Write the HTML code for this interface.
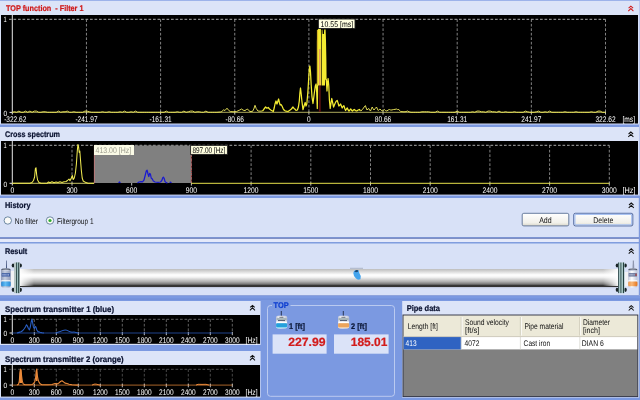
<!DOCTYPE html>
<html lang="en">
<head>
<meta charset="utf-8">
<title>TOP function - Filter 1</title>
<style>
html,body{margin:0;padding:0;background:#7b99e1;overflow:hidden;}
body{width:640px;height:400px;position:relative;font-family:"Liberation Sans", sans-serif;}
svg{position:absolute;left:-4px;top:-4px;display:block;font-family:"Liberation Sans", sans-serif;will-change:transform;filter:blur(0.45px);}
svg text{white-space:pre;}
</style>
</head>
<body>
<svg width="648" height="408" viewBox="-4 -4 648 408" text-rendering="geometricPrecision">
<rect x="-4" y="-4" width="648" height="408" fill="#7b99e1"/>
<rect x="-4" y="0" width="648" height="1" fill="#9db3ea"/>
<rect x="-4" y="1" width="648" height="14" fill="#dce4f8"/>
<rect x="-4" y="15" width="648" height="109" fill="#d8e1f7"/>
<rect x="1" y="15" width="637" height="108.5" fill="#000"/>
<text x="6" y="11" font-size="8.2" fill="#d01818" font-weight="bold" stroke="#d01818" stroke-width="0.22" textLength="77.5" lengthAdjust="spacingAndGlyphs">TOP function&#160; - Filter 1</text>
<path d="M628.6 8.2 L630.85 6.2 L633.1 8.2 M628.3 11.1 L630.85 8.6 L633.4 11.1" fill="none" stroke="#d01818" stroke-width="1.05"/>
<line x1="12.3" y1="15" x2="12.3" y2="114.5" stroke="#e8e8e8" stroke-width="1"/>
<line x1="9" y1="19.3" x2="605.5" y2="19.3" stroke="#bcbcbc" stroke-width="0.9" stroke-dasharray="2.7 1.8"/>
<line x1="9.5" y1="112.4" x2="12" y2="112.4" stroke="#e8e8e8" stroke-width="1"/>
<line x1="86.45" y1="19.3" x2="86.45" y2="112" stroke="#9a9a9a" stroke-width="0.85" stroke-dasharray="2.7 1.8"/>
<line x1="86.45" y1="111.6" x2="86.45" y2="114.6" stroke="#d6d6d6" stroke-width="0.9"/>
<line x1="160.6" y1="19.3" x2="160.6" y2="112" stroke="#9a9a9a" stroke-width="0.85" stroke-dasharray="2.7 1.8"/>
<line x1="160.6" y1="111.6" x2="160.6" y2="114.6" stroke="#d6d6d6" stroke-width="0.9"/>
<line x1="234.75" y1="19.3" x2="234.75" y2="112" stroke="#9a9a9a" stroke-width="0.85" stroke-dasharray="2.7 1.8"/>
<line x1="234.75" y1="111.6" x2="234.75" y2="114.6" stroke="#d6d6d6" stroke-width="0.9"/>
<line x1="308.9" y1="19.3" x2="308.9" y2="112" stroke="#9a9a9a" stroke-width="0.85" stroke-dasharray="2.7 1.8"/>
<line x1="308.9" y1="111.6" x2="308.9" y2="114.6" stroke="#d6d6d6" stroke-width="0.9"/>
<line x1="383.05" y1="19.3" x2="383.05" y2="112" stroke="#9a9a9a" stroke-width="0.85" stroke-dasharray="2.7 1.8"/>
<line x1="383.05" y1="111.6" x2="383.05" y2="114.6" stroke="#d6d6d6" stroke-width="0.9"/>
<line x1="457.2" y1="19.3" x2="457.2" y2="112" stroke="#9a9a9a" stroke-width="0.85" stroke-dasharray="2.7 1.8"/>
<line x1="457.2" y1="111.6" x2="457.2" y2="114.6" stroke="#d6d6d6" stroke-width="0.9"/>
<line x1="531.35" y1="19.3" x2="531.35" y2="112" stroke="#9a9a9a" stroke-width="0.85" stroke-dasharray="2.7 1.8"/>
<line x1="531.35" y1="111.6" x2="531.35" y2="114.6" stroke="#d6d6d6" stroke-width="0.9"/>
<line x1="605.5" y1="19.3" x2="605.5" y2="112" stroke="#9a9a9a" stroke-width="0.85" stroke-dasharray="2.7 1.8"/>
<line x1="605.5" y1="111.6" x2="605.5" y2="114.6" stroke="#d6d6d6" stroke-width="0.9"/>
<text x="3.6" y="22" font-size="7.6" fill="#fff" textLength="3.2" lengthAdjust="spacingAndGlyphs">1</text>
<text x="3.6" y="116.2" font-size="7.6" fill="#fff" textLength="3.6" lengthAdjust="spacingAndGlyphs">0</text>
<text x="4.2" y="122" font-size="8.2" fill="#fff" textLength="22.15" lengthAdjust="spacingAndGlyphs">-322.62</text>
<text x="75.38" y="122" font-size="8.2" fill="#fff" textLength="22.15" lengthAdjust="spacingAndGlyphs">-241.97</text>
<text x="149.53" y="122" font-size="8.2" fill="#fff" textLength="22.15" lengthAdjust="spacingAndGlyphs">-161.31</text>
<text x="225.5" y="122" font-size="8.2" fill="#fff" textLength="18.5" lengthAdjust="spacingAndGlyphs">-80.66</text>
<text x="307.08" y="122" font-size="8.2" fill="#fff" textLength="3.65" lengthAdjust="spacingAndGlyphs">0</text>
<text x="374.8" y="122" font-size="8.2" fill="#fff" textLength="16.5" lengthAdjust="spacingAndGlyphs">80.66</text>
<text x="447.13" y="122" font-size="8.2" fill="#fff" textLength="20.15" lengthAdjust="spacingAndGlyphs">161.31</text>
<text x="521.27" y="122" font-size="8.2" fill="#fff" textLength="20.15" lengthAdjust="spacingAndGlyphs">241.97</text>
<text x="595.42" y="122" font-size="8.2" fill="#fff" textLength="20.15" lengthAdjust="spacingAndGlyphs">322.62</text>
<text x="622.5" y="122" font-size="8.2" fill="#fff" textLength="12.5" lengthAdjust="spacingAndGlyphs">[ms]</text>
<line x1="12.3" y1="112.3" x2="605.5" y2="112.3" stroke="#d8d474" stroke-width="0.8"/>
<polyline points="12.3,112.3 14.5,111.8 16.7,112.3 18.9,111.1 21.1,112.3 23.3,112.3 25.5,111.1 27.7,112.3 29.9,111.1 32.1,112.3 34.3,111.1 36.5,111.1 38.7,112.3 40.9,112.3 43.1,111.8 45.3,111.8 47.5,112.3 49.7,112.3 51.9,112.3 54.1,112.3 56.3,112.3 58.5,111.1 60.7,112.3 62.9,111.8 65.1,111.8 67.3,111.1 69.5,112.3 71.7,112.3 73.9,111.8 76.1,112.3 78.3,112.3 80.5,112.3 82.7,112.3 84.9,111.1 87.1,111.1 89.3,111.8 91.5,112.3 93.7,112.3 95.9,112.3 98.1,112.3 100.3,112.3 102.5,111.8 104.7,112.3 106.9,112.3 109.1,111.8 111.3,112.3 113.5,112.3 115.7,112.3 117.9,112.3 120.1,111.8 122.3,112.3 124.5,111.1 126.7,112.3 128.9,112.3 131.1,111.8 133.3,112.3 135.5,111.1 137.7,112.3 139.9,112.3 142.1,112.3 144.3,112.3 146.5,112.3 148.7,112.3 150.9,112.3 153.1,112.3 155.3,112.3 157.5,112.3 159.7,112.3 161.9,112.3 164.1,112.3 166.3,111.1 168.5,112.3 170.7,112.3 172.9,112.3 175.1,112.3 177.3,111.8 179.5,112.3 181.7,112.3 183.9,111.1 186.1,112.3 188.3,111.8 190.5,111.1 192.7,111.1 194.9,112.3 197.1,111.8 199.3,111.8 201.5,112.3 203.7,112.3 205.9,111.1 208.1,112.3 210.3,112.3 212.5,112.3 214.7,112.3 216.9,112.3 220.5,112 221.8,111.5 223.5,109.9 225,110.5 227,108.2 228.8,110.5 230.4,111.5 233,111.8 236.4,111.6 238,110.8 239.8,110 241.5,109 243.2,110.2 245,110.6 246.3,109.6 247.5,109 248.8,110.6 250,111.5 252.5,111.4 253.8,109 255,105.3 256.2,108.5 257.9,111 260,111.2 262.5,111" fill="none" stroke="#ebe55a" stroke-width="0.95" stroke-linejoin="round"/>
<polyline points="262.5,111 264,109 265.6,107 266.9,108.2 268.2,107.5 269.5,109 270.8,110 273.3,111.5 274.3,107.5 275,104 276,101 277,104 277.8,101.5 278.6,99 279.4,102.5 280.2,105 281.1,104.6 282,106 283.2,108.8 284.5,110.5 286,111.2 288,111.5 289.8,110.3 291.4,109 293,107 294,108.4 294.8,109 296,110.4 297.4,110 298.4,107 299.3,101 299.9,93 300.5,88 301.2,94 301.9,101 303,109.7 304.2,105.5 305.2,102.5 306,106 306.8,104 307.8,93 308.8,77 309.4,68 309.9,66 310.5,72 311.2,85 312,97 313,103.5 314.2,94 315.3,86 316.1,84 316.7,92 317.3,108.5 317.6,85" fill="none" stroke="#f4ec32" stroke-width="1.25" stroke-linejoin="round"/>
<polyline points="326.3,79 327,91 327.6,82 328.1,78.5 328.8,86 329.4,100 330.2,108.5 331,103 331.75,98.5 332.6,102.5 333.6,107 334.8,104 336,101.5 337.2,100.4 338.2,103.5 338.9,106 339.9,105 340.6,104 341.4,106 342.2,108 343.1,106.5 343.9,105.6 344.8,108.5 345.6,110.5 346.5,109 347.3,108 348.2,110 349,111 350,109.8 350.8,109 351.7,110.4 352.5,111 353.4,110 354.2,109.5 355.5,110.6 356.8,111 358.2,110 359.4,109.5 360.2,110.5" fill="none" stroke="#f4ec32" stroke-width="1.25" stroke-linejoin="round"/>
<polyline points="360.2,110.5 361,111 362,109.8 362.8,109 364.2,107 365.4,105.6 366.2,108 367,110 367.9,109 368.8,108.5 369.7,110.2 370.5,111 371.4,108.8 372.2,107 373.1,108.8 374,110 375.3,108.4 376.5,107 377.4,109 378.3,110.5 379.2,109.6 380,109 381.3,110.4 382.6,111 383.5,110 384.3,109.5 385.6,110.6 386.9,111 388.2,110 389.4,109.5 390.7,110 392,110 393,109.6 393.7,109.5 395,109.4 396.3,109 397.6,109.6 398.9,109.5 399.8,110.8 400.6,111.5 404,111.8 406,111.6 407.5,111 409,111.8 411,112.3 413.2,112.3 415.4,112.3 417.6,112.3 419.8,112.3 422.0,111.8 424.2,111.8 426.4,111.8 428.6,111.8 430.8,112.3 433.0,112.3 435.2,112.3 437.4,111.1 439.6,112.3 441.8,112.3 444.0,112.3 446.2,112.3 448.4,112.3 450.6,112.3 452.8,112.3 455.0,112.3 457.2,111.1 459.4,112.3 461.6,112.3 463.8,112.3 466.0,112.3 468.2,112.3 470.4,112.3 472.6,111.8 474.8,112.3 477.0,111.1 479.2,111.1 481.4,111.8 483.6,111.8 485.8,112.3 488.0,111.1 490.2,111.1 492.4,111.8 494.6,111.8 496.8,112.3 499.0,111.1 501.2,112.3 503.4,112.3 505.6,111.8 507.8,112.3 510.0,112.3 512.2,112.3 514.4,111.8 516.6,112.3 518.8,112.3 521.0,112.3 523.2,112.3 525.4,111.1 527.6,111.8 529.8,112.3 532.0,112.3 534.2,112.3 536.4,111.8 538.6,111.1 540.8,112.3 543.0,112.3 545.2,111.8 547.4,112.3 549.6,111.1 551.8,112.3 554.0,112.3 556.2,112.3 558.4,112.3 560.6,112.3 562.8,112.3 565.0,111.8 567.2,112.3 569.4,112.3 571.6,112.3 573.8,112.3 576.0,111.8 578.2,112.3 580.4,112.3 582.6,112.3 584.8,112.3 587.0,112.3 589.2,112.3 591.4,111.8 593.6,112.3 595.8,112.3 598.0,111.1 600.2,111.1 602.4,112.3 604.6,112.3 605.5,112.3" fill="none" stroke="#ebe55a" stroke-width="0.95" stroke-linejoin="round"/>
<polygon points="316.9,85.5 316.9,42 317.3,31 318,29 320.9,29 321.1,40 321.1,85.5" fill="#f4ec32"/>
<polygon points="321.7,85.5 321.7,30 322.4,29.5 322.7,34 323.9,34 324.2,29.5 325.6,29.5 326,40 326.4,60 326.6,79 325.2,80 325,85.5" fill="#f4ec32"/>
<rect x="316.9" y="30" width="1.2" height="55" fill="#d4b426"/>
<rect x="319" y="49" width="1.5" height="36.5" fill="#e8a05c"/>
<rect x="318.9" y="85.5" width="1.8" height="26.5" fill="#5c1010"/>
<rect x="318.4" y="19" width="36.6" height="9.5" fill="#ffffe1" stroke="#222" stroke-width="0.9"/>
<text x="320.6" y="27" font-size="8.2" fill="#000" textLength="32.5" lengthAdjust="spacingAndGlyphs">10.55 [ms]</text>
<rect x="-4" y="124" width="648" height="1" fill="#a9bbec"/>
<rect x="-4" y="125" width="648" height="2" fill="#7c99e0"/>
<rect x="-4" y="127" width="648" height="14" fill="#dce4f8"/>
<rect x="-4" y="141" width="648" height="54" fill="#d8e1f7"/>
<rect x="1" y="141" width="637" height="53.6" fill="#000"/>
<text x="5" y="137.4" font-size="8.2" fill="#0a1230" font-weight="bold" stroke="#0a1230" stroke-width="0.22" textLength="55" lengthAdjust="spacingAndGlyphs">Cross spectrum</text>
<path d="M628.6 134.0 L630.85 132 L633.1 134.0 M628.3 136.9 L630.85 134.4 L633.4 136.9" fill="none" stroke="#101010" stroke-width="1.05"/>
<line x1="12.3" y1="141" x2="12.3" y2="185.5" stroke="#e8e8e8" stroke-width="1"/>
<line x1="9" y1="145.3" x2="609.3" y2="145.3" stroke="#bcbcbc" stroke-width="0.9" stroke-dasharray="2.7 1.8"/>
<line x1="9.5" y1="183.3" x2="12" y2="183.3" stroke="#e8e8e8" stroke-width="1"/>
<line x1="72.0" y1="145.3" x2="72.0" y2="183" stroke="#9a9a9a" stroke-width="0.85" stroke-dasharray="2.7 1.8"/>
<line x1="72.0" y1="182.6" x2="72.0" y2="185.6" stroke="#d6d6d6" stroke-width="0.9"/>
<line x1="131.7" y1="145.3" x2="131.7" y2="183" stroke="#9a9a9a" stroke-width="0.85" stroke-dasharray="2.7 1.8"/>
<line x1="131.7" y1="182.6" x2="131.7" y2="185.6" stroke="#d6d6d6" stroke-width="0.9"/>
<line x1="191.4" y1="145.3" x2="191.4" y2="183" stroke="#9a9a9a" stroke-width="0.85" stroke-dasharray="2.7 1.8"/>
<line x1="191.4" y1="182.6" x2="191.4" y2="185.6" stroke="#d6d6d6" stroke-width="0.9"/>
<line x1="251.1" y1="145.3" x2="251.1" y2="183" stroke="#9a9a9a" stroke-width="0.85" stroke-dasharray="2.7 1.8"/>
<line x1="251.1" y1="182.6" x2="251.1" y2="185.6" stroke="#d6d6d6" stroke-width="0.9"/>
<line x1="310.8" y1="145.3" x2="310.8" y2="183" stroke="#9a9a9a" stroke-width="0.85" stroke-dasharray="2.7 1.8"/>
<line x1="310.8" y1="182.6" x2="310.8" y2="185.6" stroke="#d6d6d6" stroke-width="0.9"/>
<line x1="370.5" y1="145.3" x2="370.5" y2="183" stroke="#9a9a9a" stroke-width="0.85" stroke-dasharray="2.7 1.8"/>
<line x1="370.5" y1="182.6" x2="370.5" y2="185.6" stroke="#d6d6d6" stroke-width="0.9"/>
<line x1="430.2" y1="145.3" x2="430.2" y2="183" stroke="#9a9a9a" stroke-width="0.85" stroke-dasharray="2.7 1.8"/>
<line x1="430.2" y1="182.6" x2="430.2" y2="185.6" stroke="#d6d6d6" stroke-width="0.9"/>
<line x1="489.9" y1="145.3" x2="489.9" y2="183" stroke="#9a9a9a" stroke-width="0.85" stroke-dasharray="2.7 1.8"/>
<line x1="489.9" y1="182.6" x2="489.9" y2="185.6" stroke="#d6d6d6" stroke-width="0.9"/>
<line x1="549.6" y1="145.3" x2="549.6" y2="183" stroke="#9a9a9a" stroke-width="0.85" stroke-dasharray="2.7 1.8"/>
<line x1="549.6" y1="182.6" x2="549.6" y2="185.6" stroke="#d6d6d6" stroke-width="0.9"/>
<line x1="609.3" y1="145.3" x2="609.3" y2="183" stroke="#9a9a9a" stroke-width="0.85" stroke-dasharray="2.7 1.8"/>
<line x1="609.3" y1="182.6" x2="609.3" y2="185.6" stroke="#d6d6d6" stroke-width="0.9"/>
<text x="3.6" y="148" font-size="7.6" fill="#fff" textLength="3.2" lengthAdjust="spacingAndGlyphs">1</text>
<text x="3.6" y="186.6" font-size="7.6" fill="#fff" textLength="3.6" lengthAdjust="spacingAndGlyphs">0</text>
<text x="10.43" y="192.6" font-size="8.2" fill="#fff" textLength="3.75" lengthAdjust="spacingAndGlyphs">0</text>
<text x="66.38" y="192.6" font-size="8.2" fill="#fff" textLength="11.25" lengthAdjust="spacingAndGlyphs">300</text>
<text x="126.08" y="192.6" font-size="8.2" fill="#fff" textLength="11.25" lengthAdjust="spacingAndGlyphs">600</text>
<text x="185.78" y="192.6" font-size="8.2" fill="#fff" textLength="11.25" lengthAdjust="spacingAndGlyphs">900</text>
<text x="243.6" y="192.6" font-size="8.2" fill="#fff" textLength="15.0" lengthAdjust="spacingAndGlyphs">1200</text>
<text x="303.3" y="192.6" font-size="8.2" fill="#fff" textLength="15.0" lengthAdjust="spacingAndGlyphs">1500</text>
<text x="363.0" y="192.6" font-size="8.2" fill="#fff" textLength="15.0" lengthAdjust="spacingAndGlyphs">1800</text>
<text x="422.7" y="192.6" font-size="8.2" fill="#fff" textLength="15.0" lengthAdjust="spacingAndGlyphs">2100</text>
<text x="482.4" y="192.6" font-size="8.2" fill="#fff" textLength="15.0" lengthAdjust="spacingAndGlyphs">2400</text>
<text x="542.1" y="192.6" font-size="8.2" fill="#fff" textLength="15.0" lengthAdjust="spacingAndGlyphs">2700</text>
<text x="601.8" y="192.6" font-size="8.2" fill="#fff" textLength="15.0" lengthAdjust="spacingAndGlyphs">3000</text>
<text x="622.5" y="192.6" font-size="8.2" fill="#fff" textLength="13" lengthAdjust="spacingAndGlyphs">[Hz]</text>
<rect x="94" y="145.5" width="97.3" height="37.5" fill="#808080"/>
<line x1="94.4" y1="145.5" x2="94.4" y2="183.3" stroke="#b87878" stroke-width="1"/>
<line x1="191.3" y1="154" x2="191.3" y2="183.3" stroke="#c04848" stroke-width="1.1" stroke-dasharray="1.2 0.9"/>
<line x1="12.3" y1="183.3" x2="94" y2="183.3" stroke="#dcd870" stroke-width="0.9"/>
<line x1="191.3" y1="183.3" x2="609.3" y2="183.3" stroke="#e6e04a" stroke-width="1"/>
<polyline points="12.3,183.3 30,183.3 32,182.5 33.5,180.5 34.6,177 35.4,168.5 36,167.7 36.7,175 37.6,180 39,182.4 41,183.3 47,183.3 48.5,182 50,182.8 52,181.8 54,182.8 56,182 58,182.6 60,181.8 62,182.5 64,181.8 66,181.5 67.5,180.5 69,179 70,180.8 71.3,178 72.3,175.5 73.3,179.5 74.3,178 75.4,173 76.4,164 77.2,152 77.9,144.5 78.6,147 79.2,152.5 79.8,151 80.5,160 81.3,170 82.2,178 83.2,181 84.5,181.8 86,182.6 88,183.3 94,183.3" fill="none" stroke="#eee850" stroke-width="1.05" stroke-linejoin="round"/>
<polyline points="118.5,182.8 119.5,182 120.5,182.8" fill="none" stroke="#1a1ad0" stroke-width="1.1"/>
<polyline points="137.5,183 139,182 141,181.6 142.5,181.8 144,180 145.3,175 146.3,171 147.1,170.2 148,174 148.8,176.5 149.6,173.4 150.4,174 151.2,178 152.3,179 153.3,181 155,182 158,182.3 160.5,182 161.8,180.5 162.7,178 163.4,177.2 164.2,178.5 165,181.5 166.2,182.6 167.5,183" fill="none" stroke="#1a1ad0" stroke-width="1.25" stroke-linejoin="round"/>
<polyline points="169.5,182.6 170.5,182.2 171.5,182.8" fill="none" stroke="#1a1ad0" stroke-width="1.1"/>
<rect x="94" y="145" width="40" height="10" fill="#fafae6"/>
<text x="95.6" y="152.6" font-size="8.2" fill="#9a9a8c" textLength="35.5" lengthAdjust="spacingAndGlyphs">413.00 [Hz]</text>
<rect x="190.6" y="145.4" width="36.8" height="9" fill="#ffffe1" stroke="#222" stroke-width="0.9"/>
<text x="192.4" y="152.6" font-size="8.2" fill="#000" textLength="33" lengthAdjust="spacingAndGlyphs">897.00 [Hz]</text>
<rect x="-4" y="195" width="648" height="1" fill="#a9bbec"/>
<rect x="-4" y="196" width="648" height="2" fill="#7c99e0"/>
<rect x="-4" y="198" width="648" height="39" fill="#d8e1f7"/>
<text x="5" y="208.2" font-size="8.2" fill="#0a1230" font-weight="bold" stroke="#0a1230" stroke-width="0.22" textLength="25.5" lengthAdjust="spacingAndGlyphs">History</text>
<path d="M629 205.0 L631.25 203 L633.5 205.0 M628.7 207.9 L631.25 205.4 L633.8 207.9" fill="none" stroke="#101010" stroke-width="1.05"/>
<circle cx="7.8" cy="220.5" r="3.7" fill="#fbfbf8" stroke="#5f7d9a" stroke-width="0.9"/>
<circle cx="50" cy="220.5" r="3.7" fill="#fbfbf8" stroke="#5f7d9a" stroke-width="0.9"/>
<circle cx="50" cy="220.5" r="1.6" fill="#2fae2f"/>
<text x="14.8" y="223.5" font-size="8.2" fill="#101010" textLength="23.2" lengthAdjust="spacingAndGlyphs">No filter</text>
<text x="57" y="223.5" font-size="8.2" fill="#101010" textLength="36.5" lengthAdjust="spacingAndGlyphs">Filtergroup 1</text>
<defs><linearGradient id="btn" x1="0" y1="0" x2="0" y2="1"><stop offset="0" stop-color="#ffffff"/><stop offset="0.75" stop-color="#f1f0ea"/><stop offset="1" stop-color="#d9d6c8"/></linearGradient></defs>
<rect x="522.2" y="213.3" width="46.6" height="12.6" rx="1.6" fill="url(#btn)" stroke="#5a6f94" stroke-width="0.9"/>
<rect x="573.8" y="213.3" width="59" height="12.6" rx="1.6" fill="url(#btn)" stroke="#35508f" stroke-width="0.9"/>
<rect x="574.9" y="214.4" width="56.8" height="10.4" rx="1" fill="none" stroke="#a9c2f2" stroke-width="1.2"/>
<text x="545.4" y="222.6" font-size="8.2" fill="#101010" text-anchor="middle" textLength="12.5" lengthAdjust="spacingAndGlyphs">Add</text>
<text x="603.3" y="222.6" font-size="8.2" fill="#101010" text-anchor="middle" textLength="20" lengthAdjust="spacingAndGlyphs">Delete</text>
<rect x="-4" y="237.5" width="648" height="1.5" fill="#7f8fc4"/>
<rect x="-4" y="239" width="648" height="3.2" fill="#e4e9fa"/>
<rect x="-4" y="242.2" width="648" height="1.3" fill="#7d9bdc"/>
<rect x="-4" y="243.5" width="648" height="51.5" fill="#d8e1f7"/>
<rect x="638.8" y="196" width="5.2" height="99" fill="#7d98dc"/>
<rect x="639" y="1" width="5" height="194" fill="#bcc8ef"/>
<text x="5" y="254" font-size="8.2" fill="#0a1230" font-weight="bold" stroke="#0a1230" stroke-width="0.22" textLength="22.3" lengthAdjust="spacingAndGlyphs">Result</text>
<path d="M629 250.8 L631.25 248.8 L633.5 250.8 M628.7 253.7 L631.25 251.2 L633.8 253.7" fill="none" stroke="#101010" stroke-width="1.05"/>
<defs>
<linearGradient id="pipe" x1="0" y1="0" x2="0" y2="1">
<stop offset="0" stop-color="#bdbdbd"/><stop offset="0.12" stop-color="#d4d4d4"/><stop offset="0.33" stop-color="#ffffff"/><stop offset="0.45" stop-color="#f4f4f4"/>
<stop offset="0.7" stop-color="#b0b0b0"/><stop offset="0.84" stop-color="#787878"/><stop offset="0.93" stop-color="#2a2a2a"/><stop offset="1" stop-color="#383838"/></linearGradient>
<linearGradient id="pend" x1="0" y1="0" x2="1" y2="0"><stop offset="0" stop-color="#ffffff" stop-opacity="0.95"/><stop offset="1" stop-color="#ffffff" stop-opacity="0"/></linearGradient>
<linearGradient id="pend2" x1="1" y1="0" x2="0" y2="0"><stop offset="0" stop-color="#ffffff" stop-opacity="0.95"/><stop offset="1" stop-color="#ffffff" stop-opacity="0"/></linearGradient>
<linearGradient id="cyl" x1="0" y1="0" x2="1" y2="0"><stop offset="0" stop-color="#9aa4c0"/><stop offset="0.35" stop-color="#eef1fa"/><stop offset="1" stop-color="#a5aeca"/></linearGradient>
</defs>
<rect x="20" y="269" width="598" height="18" fill="url(#pipe)"/>
<rect x="20" y="269" width="14" height="17" fill="url(#pend)"/>
<rect x="603" y="269" width="15" height="17" fill="url(#pend2)"/>
<rect x="22" y="287" width="595" height="1.2" fill="#c4cbe2"/>
<rect x="10.6" y="271" width="3.6" height="16" fill="#f1f2f5"/>
<rect x="624.4" y="272" width="3.8" height="14.4" fill="#f1f2f5"/>
<ellipse cx="13.1" cy="265.5" rx="1.4" ry="2.1" fill="#1a2528"/>
<ellipse cx="20.5" cy="265.5" rx="1.4" ry="2.1" fill="#1a2528"/>
<ellipse cx="13.1" cy="289.8" rx="1.4" ry="2.1" fill="#1a2528"/>
<ellipse cx="20.5" cy="289.8" rx="1.4" ry="2.1" fill="#1a2528"/>
<rect x="14" y="262.5" width="6" height="30.6" fill="#b6c6c6"/>
<rect x="16" y="262.5" width="0.9" height="30.6" fill="#1f3b3c"/>
<rect x="16.9" y="262.5" width="1.3" height="30.6" fill="#9cbebe"/>
<rect x="18.2" y="262.5" width="0.9" height="30.6" fill="#1f3b3c"/>
<rect x="19.3" y="262.5" width="0.7" height="30.6" fill="#8fa4a6"/>
<ellipse cx="617.1" cy="265.5" rx="1.4" ry="2.1" fill="#1a2528"/>
<ellipse cx="625.4" cy="265.5" rx="1.4" ry="2.1" fill="#1a2528"/>
<ellipse cx="617.1" cy="289.8" rx="1.4" ry="2.1" fill="#1a2528"/>
<ellipse cx="625.4" cy="289.8" rx="1.4" ry="2.1" fill="#1a2528"/>
<rect x="618" y="262.5" width="6.5" height="30.6" fill="#a6c4c4"/>
<rect x="618" y="262.5" width="0.8" height="30.6" fill="#2a4244"/>
<rect x="620.5" y="262.5" width="0.8" height="30.6" fill="#24403f"/>
<rect x="623" y="262.5" width="1.0" height="30.6" fill="#24403f"/>
<defs><linearGradient id="cylw" x1="0" y1="0" x2="1" y2="0"><stop offset="0" stop-color="#c2c8da"/><stop offset="0.4" stop-color="#ffffff"/><stop offset="1" stop-color="#b9c0d6"/></linearGradient><linearGradient id="cylb" x1="0" y1="0" x2="1" y2="0"><stop offset="0" stop-color="#8e9ab6"/><stop offset="0.4" stop-color="#c4cde0"/><stop offset="1" stop-color="#8f9ab8"/></linearGradient><linearGradient id="bblue" x1="0" y1="0" x2="1" y2="0"><stop offset="0" stop-color="#2a8ad8"/><stop offset="0.45" stop-color="#62bcf4"/><stop offset="1" stop-color="#2a8ad8"/></linearGradient><linearGradient id="borange" x1="0" y1="0" x2="1" y2="0"><stop offset="0" stop-color="#f29a4a"/><stop offset="0.4" stop-color="#f8b878"/><stop offset="1" stop-color="#e8761c"/></linearGradient></defs>
<polygon points="6.22,260.4 6.76,260.4 6.94,268.6 6.04,268.6" fill="#2e3f6c"/>
<rect x="1" y="268.5" width="9.8" height="19" rx="1.8" fill="url(#cylb)"/>
<ellipse cx="5.9" cy="269.6" rx="4.6" ry="1.2" fill="#4a5262"/>
<ellipse cx="5.9" cy="270.2" rx="4.1" ry="0.8" fill="#c9cfdf"/>
<rect x="1.7" y="273.2" width="8.4" height="3.3" fill="#36579f"/>
<rect x="1.3" y="280.3" width="9.2" height="1.2" fill="#ffffff"/>
<rect x="1.2" y="281.5" width="9.4" height="4.8" rx="1.2" fill="url(#bblue)"/>
<rect x="2.4" y="274.1" width="1.2" height="1.5" fill="#aebde4"/>
<rect x="3.85" y="274.1" width="0.9" height="1.5" fill="#aebde4"/>
<rect x="5.3" y="274.1" width="1.1" height="1.5" fill="#aebde4"/>
<rect x="6.75" y="274.1" width="0.8" height="1.5" fill="#aebde4"/>
<rect x="8.2" y="274.1" width="0.9" height="1.5" fill="#aebde4"/>
<polygon points="632.84,260.4 633.92,260.4 634.28,268.6 632.48,268.6" fill="#8f97ae"/>
<rect x="628" y="268.5" width="9.6" height="19" rx="1.8" fill="url(#cylw)"/>
<ellipse cx="632.8" cy="269.6" rx="4.5" ry="1.2" fill="#4a5262"/>
<ellipse cx="632.8" cy="270.2" rx="4.0" ry="0.8" fill="#c9cfdf"/>
<rect x="628.7" y="273.2" width="8.2" height="3.3" fill="#5a6890"/>
<rect x="628.3" y="280.3" width="9.0" height="1.2" fill="#ffffff"/>
<rect x="628.2" y="281.5" width="9.2" height="4.8" rx="1.2" fill="url(#borange)"/>
<rect x="629.4" y="274.1" width="1.2" height="1.5" fill="#c4cbe0"/>
<rect x="630.85" y="274.1" width="0.9" height="1.5" fill="#c4cbe0"/>
<rect x="632.3" y="274.1" width="1.1" height="1.5" fill="#c4cbe0"/>
<rect x="633.75" y="274.1" width="0.8" height="1.5" fill="#c4cbe0"/>
<rect x="635.4" y="273.6" width="1.4" height="2.4" fill="#b05050"/>
<line x1="350" y1="268.3" x2="363" y2="268.3" stroke="#9aa0b0" stroke-width="0.7"/>
<path d="M354 271 L356 270 L358.5 270.3 L359.3 273 L360.8 276 L360.5 279.3 L358 279.8 L356 278.6 L354 276 L353.3 273 Z" fill="#43a4ee"/>
<path d="M354.3 271.4 L356.2 270 L358.2 270.2 L358 271.8 L356 272.2 Z" fill="#1c4a78"/>
<rect x="-4" y="295" width="648" height="1" fill="#8ea3dc"/>
<rect x="-4" y="298.6" width="648" height="1" fill="#6f8dd6"/>
<rect x="-4" y="301" width="264.6" height="14" fill="#dce4f8"/>
<rect x="-4" y="315" width="264.6" height="30" fill="#d8e1f7"/>
<rect x="1" y="315" width="259" height="28.8" fill="#000"/>
<text x="5" y="311.6" font-size="8.2" fill="#0a1230" font-weight="bold" stroke="#0a1230" stroke-width="0.22" textLength="109" lengthAdjust="spacingAndGlyphs">Spectrum transmitter 1 (blue)</text>
<path d="M250.2 307.4 L252.45 305.4 L254.7 307.4 M249.9 310.3 L252.45 307.8 L255.0 310.3" fill="none" stroke="#101010" stroke-width="1.05"/>
<line x1="12.3" y1="315" x2="12.3" y2="335.0" stroke="#e8e8e8" stroke-width="1"/>
<line x1="9" y1="319.3" x2="232.3" y2="319.3" stroke="#6c6c6c" stroke-width="0.9" stroke-dasharray="2.7 1.8"/>
<line x1="9.5" y1="333.0" x2="12" y2="333.0" stroke="#e8e8e8" stroke-width="1"/>
<line x1="34.3" y1="319.3" x2="34.3" y2="333.0" stroke="#6c6c6c" stroke-width="0.9" stroke-dasharray="2.7 1.8"/>
<line x1="34.3" y1="331.8" x2="34.3" y2="335.2" stroke="#d6d6d6" stroke-width="0.9"/>
<line x1="56.3" y1="319.3" x2="56.3" y2="333.0" stroke="#6c6c6c" stroke-width="0.9" stroke-dasharray="2.7 1.8"/>
<line x1="56.3" y1="331.8" x2="56.3" y2="335.2" stroke="#d6d6d6" stroke-width="0.9"/>
<line x1="78.3" y1="319.3" x2="78.3" y2="333.0" stroke="#6c6c6c" stroke-width="0.9" stroke-dasharray="2.7 1.8"/>
<line x1="78.3" y1="331.8" x2="78.3" y2="335.2" stroke="#d6d6d6" stroke-width="0.9"/>
<line x1="100.3" y1="319.3" x2="100.3" y2="333.0" stroke="#6c6c6c" stroke-width="0.9" stroke-dasharray="2.7 1.8"/>
<line x1="100.3" y1="331.8" x2="100.3" y2="335.2" stroke="#d6d6d6" stroke-width="0.9"/>
<line x1="122.3" y1="319.3" x2="122.3" y2="333.0" stroke="#6c6c6c" stroke-width="0.9" stroke-dasharray="2.7 1.8"/>
<line x1="122.3" y1="331.8" x2="122.3" y2="335.2" stroke="#d6d6d6" stroke-width="0.9"/>
<line x1="144.3" y1="319.3" x2="144.3" y2="333.0" stroke="#6c6c6c" stroke-width="0.9" stroke-dasharray="2.7 1.8"/>
<line x1="144.3" y1="331.8" x2="144.3" y2="335.2" stroke="#d6d6d6" stroke-width="0.9"/>
<line x1="166.3" y1="319.3" x2="166.3" y2="333.0" stroke="#6c6c6c" stroke-width="0.9" stroke-dasharray="2.7 1.8"/>
<line x1="166.3" y1="331.8" x2="166.3" y2="335.2" stroke="#d6d6d6" stroke-width="0.9"/>
<line x1="188.3" y1="319.3" x2="188.3" y2="333.0" stroke="#6c6c6c" stroke-width="0.9" stroke-dasharray="2.7 1.8"/>
<line x1="188.3" y1="331.8" x2="188.3" y2="335.2" stroke="#d6d6d6" stroke-width="0.9"/>
<line x1="210.3" y1="319.3" x2="210.3" y2="333.0" stroke="#6c6c6c" stroke-width="0.9" stroke-dasharray="2.7 1.8"/>
<line x1="210.3" y1="331.8" x2="210.3" y2="335.2" stroke="#d6d6d6" stroke-width="0.9"/>
<line x1="232.3" y1="319.3" x2="232.3" y2="333.0" stroke="#6c6c6c" stroke-width="0.9" stroke-dasharray="2.7 1.8"/>
<line x1="232.3" y1="331.8" x2="232.3" y2="335.2" stroke="#d6d6d6" stroke-width="0.9"/>
<text x="3.6" y="322.1" font-size="7.6" fill="#fff" textLength="3.2" lengthAdjust="spacingAndGlyphs">1</text>
<text x="3.6" y="336.2" font-size="7.6" fill="#fff" textLength="3.6" lengthAdjust="spacingAndGlyphs">0</text>
<text x="10.48" y="342.7" font-size="8.2" fill="#fff" textLength="3.65" lengthAdjust="spacingAndGlyphs">0</text>
<text x="28.82" y="342.7" font-size="8.2" fill="#fff" textLength="10.95" lengthAdjust="spacingAndGlyphs">300</text>
<text x="50.82" y="342.7" font-size="8.2" fill="#fff" textLength="10.95" lengthAdjust="spacingAndGlyphs">600</text>
<text x="72.83" y="342.7" font-size="8.2" fill="#fff" textLength="10.95" lengthAdjust="spacingAndGlyphs">900</text>
<text x="93.0" y="342.7" font-size="8.2" fill="#fff" textLength="14.6" lengthAdjust="spacingAndGlyphs">1200</text>
<text x="115.0" y="342.7" font-size="8.2" fill="#fff" textLength="14.6" lengthAdjust="spacingAndGlyphs">1500</text>
<text x="137.0" y="342.7" font-size="8.2" fill="#fff" textLength="14.6" lengthAdjust="spacingAndGlyphs">1800</text>
<text x="159.0" y="342.7" font-size="8.2" fill="#fff" textLength="14.6" lengthAdjust="spacingAndGlyphs">2100</text>
<text x="181.0" y="342.7" font-size="8.2" fill="#fff" textLength="14.6" lengthAdjust="spacingAndGlyphs">2400</text>
<text x="203.0" y="342.7" font-size="8.2" fill="#fff" textLength="14.6" lengthAdjust="spacingAndGlyphs">2700</text>
<text x="225.0" y="342.7" font-size="8.2" fill="#fff" textLength="14.6" lengthAdjust="spacingAndGlyphs">3000</text>
<text x="245.6" y="342.7" font-size="8.2" fill="#fff" textLength="12" lengthAdjust="spacingAndGlyphs">[Hz]</text>
<line x1="12.3" y1="333.0" x2="232.3" y2="333.0" stroke="#2a5fc4" stroke-width="0.9" opacity="0.8"/>
<polyline points="17,333.0 19,332.4 21,331.8 22.5,330.8 24,329.0 25.4,327.0 26.5,324.7 27.4,326.0 28.4,328.5 29.4,329.8 30.3,327.0 31.2,322.0 31.9,319.0 32.6,322.5 33.4,327.0 34.3,328.5 35.2,326.5 35.9,327.0 36.8,330.0 38,331.6 40,332.2 42,332.7 44,333.0" fill="none" stroke="#2a5fc4" stroke-width="1.1" stroke-linejoin="round"/>
<polyline points="56,333.0 58,332.2 60,331.6 62,330.8 64,330.2 66,330.0 68,330.8 70,331.8 72,332.2 74,332.0 76,332.5 78,333.0" fill="none" stroke="#2a5fc4" stroke-width="1" stroke-linejoin="round"/>
<rect x="-4" y="351" width="264.6" height="14" fill="#dce4f8"/>
<rect x="-4" y="365" width="264.6" height="32.6" fill="#d8e1f7"/>
<rect x="1" y="365" width="259" height="31.6" fill="#000"/>
<text x="5" y="361.6" font-size="8.2" fill="#0a1230" font-weight="bold" stroke="#0a1230" stroke-width="0.22" textLength="118.6" lengthAdjust="spacingAndGlyphs">Spectrum transmitter 2 (orange)</text>
<path d="M250.2 357.4 L252.45 355.4 L254.7 357.4 M249.9 360.3 L252.45 357.8 L255.0 360.3" fill="none" stroke="#101010" stroke-width="1.05"/>
<line x1="12.3" y1="365" x2="12.3" y2="387.1" stroke="#e8e8e8" stroke-width="1"/>
<line x1="9" y1="369.3" x2="232.3" y2="369.3" stroke="#505050" stroke-width="0.9" stroke-dasharray="2.7 1.8"/>
<line x1="9.5" y1="385.1" x2="12" y2="385.1" stroke="#e8e8e8" stroke-width="1"/>
<line x1="34.3" y1="369.3" x2="34.3" y2="385.1" stroke="#505050" stroke-width="0.9" stroke-dasharray="2.7 1.8"/>
<line x1="34.3" y1="383.90000000000003" x2="34.3" y2="387.3" stroke="#d6d6d6" stroke-width="0.9"/>
<line x1="56.3" y1="369.3" x2="56.3" y2="385.1" stroke="#505050" stroke-width="0.9" stroke-dasharray="2.7 1.8"/>
<line x1="56.3" y1="383.90000000000003" x2="56.3" y2="387.3" stroke="#d6d6d6" stroke-width="0.9"/>
<line x1="78.3" y1="369.3" x2="78.3" y2="385.1" stroke="#505050" stroke-width="0.9" stroke-dasharray="2.7 1.8"/>
<line x1="78.3" y1="383.90000000000003" x2="78.3" y2="387.3" stroke="#d6d6d6" stroke-width="0.9"/>
<line x1="100.3" y1="369.3" x2="100.3" y2="385.1" stroke="#505050" stroke-width="0.9" stroke-dasharray="2.7 1.8"/>
<line x1="100.3" y1="383.90000000000003" x2="100.3" y2="387.3" stroke="#d6d6d6" stroke-width="0.9"/>
<line x1="122.3" y1="369.3" x2="122.3" y2="385.1" stroke="#505050" stroke-width="0.9" stroke-dasharray="2.7 1.8"/>
<line x1="122.3" y1="383.90000000000003" x2="122.3" y2="387.3" stroke="#d6d6d6" stroke-width="0.9"/>
<line x1="144.3" y1="369.3" x2="144.3" y2="385.1" stroke="#505050" stroke-width="0.9" stroke-dasharray="2.7 1.8"/>
<line x1="144.3" y1="383.90000000000003" x2="144.3" y2="387.3" stroke="#d6d6d6" stroke-width="0.9"/>
<line x1="166.3" y1="369.3" x2="166.3" y2="385.1" stroke="#505050" stroke-width="0.9" stroke-dasharray="2.7 1.8"/>
<line x1="166.3" y1="383.90000000000003" x2="166.3" y2="387.3" stroke="#d6d6d6" stroke-width="0.9"/>
<line x1="188.3" y1="369.3" x2="188.3" y2="385.1" stroke="#505050" stroke-width="0.9" stroke-dasharray="2.7 1.8"/>
<line x1="188.3" y1="383.90000000000003" x2="188.3" y2="387.3" stroke="#d6d6d6" stroke-width="0.9"/>
<line x1="210.3" y1="369.3" x2="210.3" y2="385.1" stroke="#505050" stroke-width="0.9" stroke-dasharray="2.7 1.8"/>
<line x1="210.3" y1="383.90000000000003" x2="210.3" y2="387.3" stroke="#d6d6d6" stroke-width="0.9"/>
<line x1="232.3" y1="369.3" x2="232.3" y2="385.1" stroke="#505050" stroke-width="0.9" stroke-dasharray="2.7 1.8"/>
<line x1="232.3" y1="383.90000000000003" x2="232.3" y2="387.3" stroke="#d6d6d6" stroke-width="0.9"/>
<text x="3.6" y="372.1" font-size="7.6" fill="#fff" textLength="3.2" lengthAdjust="spacingAndGlyphs">1</text>
<text x="3.6" y="388.3" font-size="7.6" fill="#fff" textLength="3.6" lengthAdjust="spacingAndGlyphs">0</text>
<text x="10.48" y="395.40000000000003" font-size="8.2" fill="#fff" textLength="3.65" lengthAdjust="spacingAndGlyphs">0</text>
<text x="28.82" y="395.40000000000003" font-size="8.2" fill="#fff" textLength="10.95" lengthAdjust="spacingAndGlyphs">300</text>
<text x="50.82" y="395.40000000000003" font-size="8.2" fill="#fff" textLength="10.95" lengthAdjust="spacingAndGlyphs">600</text>
<text x="72.83" y="395.40000000000003" font-size="8.2" fill="#fff" textLength="10.95" lengthAdjust="spacingAndGlyphs">900</text>
<text x="93.0" y="395.40000000000003" font-size="8.2" fill="#fff" textLength="14.6" lengthAdjust="spacingAndGlyphs">1200</text>
<text x="115.0" y="395.40000000000003" font-size="8.2" fill="#fff" textLength="14.6" lengthAdjust="spacingAndGlyphs">1500</text>
<text x="137.0" y="395.40000000000003" font-size="8.2" fill="#fff" textLength="14.6" lengthAdjust="spacingAndGlyphs">1800</text>
<text x="159.0" y="395.40000000000003" font-size="8.2" fill="#fff" textLength="14.6" lengthAdjust="spacingAndGlyphs">2100</text>
<text x="181.0" y="395.40000000000003" font-size="8.2" fill="#fff" textLength="14.6" lengthAdjust="spacingAndGlyphs">2400</text>
<text x="203.0" y="395.40000000000003" font-size="8.2" fill="#fff" textLength="14.6" lengthAdjust="spacingAndGlyphs">2700</text>
<text x="225.0" y="395.40000000000003" font-size="8.2" fill="#fff" textLength="14.6" lengthAdjust="spacingAndGlyphs">3000</text>
<text x="245.6" y="395.40000000000003" font-size="8.2" fill="#fff" textLength="12" lengthAdjust="spacingAndGlyphs">[Hz]</text>
<line x1="12.3" y1="385.1" x2="232.3" y2="385.1" stroke="#ec8a3a" stroke-width="0.9" opacity="0.8"/>
<polyline points="17,385.1 18.5,384.3 19.3,381.1 19.9,373.1 20.4,369.1 21,369.6 21.6,376.1 22.3,381.1 23.2,383.9 25,384.8 30,384.8 32,384.5 33.5,383.6 34.8,381.6 35.6,378.1 36.2,371.1 36.8,369.1 37.4,376.1 38.2,380.1 39.2,382.6 40.5,384.1 42,384.8 48,384.8 52,384.5 55,383.5 57,383.9 59,382.9 60.5,381.5 62,380.7 63.5,381.9 65,383.1 67,383.5 69,384.3 72,384.7 78,385.1" fill="none" stroke="#ec8a3a" stroke-width="1.1" stroke-linejoin="round"/>
<polyline points="92,385.1 94,384.2 96,384.1 98,384.6 100,385.1" fill="none" stroke="#ec8a3a" stroke-width="1" stroke-linejoin="round"/>
<polyline points="196,385.1 198,384.3 202,384.4 206,384.3 209,385.1" fill="none" stroke="#ec8a3a" stroke-width="1" stroke-linejoin="round"/>
<polygon points="19.3,383 19.8,372 20.3,369.2 21.2,369.6 21.8,376 22.1,383" fill="#ec8a3a"/>
<polygon points="35.9,381 36.3,371 36.8,369.2 37.3,376 37.6,381" fill="#ec8a3a"/>
<rect x="267.5" y="305.5" width="127" height="90.8" rx="3" fill="none" stroke="#c2cff2" stroke-width="0.9"/>
<rect x="272" y="302" width="18.5" height="7" fill="#7b99e1"/>
<text x="273.6" y="308.1" font-size="8.4" fill="#0f3fd0" font-weight="bold" stroke="#0f3fd0" stroke-width="0.22" textLength="15.2" lengthAdjust="spacingAndGlyphs">TOP</text>
<rect x="272.6" y="334.4" width="54" height="19.3" fill="#dbe3f8"/>
<rect x="334" y="334.4" width="54.6" height="19.3" fill="#dbe3f8"/>
<text x="325.6" y="346.4" font-size="11.9" fill="#d21c1c" font-weight="bold" stroke="#d21c1c" stroke-width="0.22" text-anchor="end" textLength="37.4" lengthAdjust="spacingAndGlyphs">227.99</text>
<text x="387.4" y="346.4" font-size="11.9" fill="#d21c1c" font-weight="bold" stroke="#d21c1c" stroke-width="0.22" text-anchor="end" textLength="36.6" lengthAdjust="spacingAndGlyphs">185.01</text>
<line x1="281.3" y1="311" x2="281.3" y2="316.2" stroke="#1f2a44" stroke-width="0.9"/>
<rect x="276" y="315.8" width="11.2" height="12.6" rx="1.8" fill="url(#cylw)"/>
<rect x="279.4" y="316.8" width="4" height="0.8" fill="#3c4454"/>
<rect x="276.5" y="318.1" width="10.2" height="2" fill="#a4b2b6"/>
<rect x="278" y="320.1" width="7" height="1.1" fill="#4a5468"/>
<rect x="276.3" y="321.5" width="10.6" height="1.6" fill="#ffffff"/>
<rect x="276.1" y="323.3" width="11" height="5" rx="1.6" fill="#a8e4f4"/>
<rect x="276.1" y="323.3" width="11" height="3.9" rx="1.2" fill="#25a0dc"/>
<line x1="343.3" y1="311" x2="343.3" y2="316.2" stroke="#1f2a44" stroke-width="0.9"/>
<rect x="338" y="315.8" width="11.2" height="12.6" rx="1.8" fill="url(#cylw)"/>
<rect x="341.4" y="316.8" width="4" height="0.8" fill="#3c4454"/>
<rect x="338.5" y="318.1" width="10.2" height="2" fill="#a4b2b6"/>
<rect x="340" y="320.1" width="7" height="1.1" fill="#4a5468"/>
<rect x="338.3" y="321.5" width="10.6" height="1.6" fill="#ffffff"/>
<rect x="338.1" y="323.3" width="11" height="5" rx="1.6" fill="#f6dcc0"/>
<rect x="338.1" y="323.3" width="11" height="3.9" rx="1.2" fill="#eca45c"/>
<text x="289" y="329.2" font-size="8.2" fill="#0c1838" font-weight="bold" stroke="#0c1838" stroke-width="0.22" textLength="16" lengthAdjust="spacingAndGlyphs">1 [ft]</text>
<text x="351" y="329.2" font-size="8.2" fill="#0c1838" font-weight="bold" stroke="#0c1838" stroke-width="0.22" textLength="16" lengthAdjust="spacingAndGlyphs">2 [ft]</text>
<rect x="402.2" y="301" width="237" height="14" fill="#dce4f8"/>
<rect x="402.2" y="315" width="237" height="82.6" fill="#d8e1f7"/>
<text x="406.7" y="311.2" font-size="8.2" fill="#0a1230" font-weight="bold" stroke="#0a1230" stroke-width="0.22" textLength="33.3" lengthAdjust="spacingAndGlyphs">Pipe data</text>
<path d="M629 307.6 L631.25 305.6 L633.5 307.6 M628.7 310.5 L631.25 308.0 L633.8 310.5" fill="none" stroke="#101010" stroke-width="1.05"/>
<rect x="403" y="315" width="234.8" height="81.6" fill="#808080" stroke="#2c3040" stroke-width="0.9"/>
<rect x="403.6" y="315.6" width="233.6" height="21.2" fill="#ece9d8"/>
<rect x="403.6" y="336.8" width="233.6" height="12.6" fill="#ffffff"/>
<rect x="403.6" y="336.8" width="57.6" height="12.6" fill="#2f63c2"/>
<line x1="461.2" y1="317" x2="461.2" y2="335.5" stroke="#c9c5b4" stroke-width="0.9"/>
<line x1="462.09999999999997" y1="317" x2="462.09999999999997" y2="335.5" stroke="#ffffff" stroke-width="0.9"/>
<line x1="461.2" y1="336.8" x2="461.2" y2="349.4" stroke="#d8d8d0" stroke-width="0.8"/>
<line x1="520.4" y1="317" x2="520.4" y2="335.5" stroke="#c9c5b4" stroke-width="0.9"/>
<line x1="521.3" y1="317" x2="521.3" y2="335.5" stroke="#ffffff" stroke-width="0.9"/>
<line x1="520.4" y1="336.8" x2="520.4" y2="349.4" stroke="#d8d8d0" stroke-width="0.8"/>
<line x1="579.8" y1="317" x2="579.8" y2="335.5" stroke="#c9c5b4" stroke-width="0.9"/>
<line x1="580.6999999999999" y1="317" x2="580.6999999999999" y2="335.5" stroke="#ffffff" stroke-width="0.9"/>
<line x1="579.8" y1="336.8" x2="579.8" y2="349.4" stroke="#d8d8d0" stroke-width="0.8"/>
<line x1="403.6" y1="336.6" x2="637.2" y2="336.6" stroke="#cfcbbb" stroke-width="0.9"/>
<text x="407.8" y="329.4" font-size="8.2" fill="#101010" textLength="30" lengthAdjust="spacingAndGlyphs">Length [ft]</text>
<text x="465" y="324.6" font-size="8.2" fill="#101010" textLength="44" lengthAdjust="spacingAndGlyphs">Sound velocity</text>
<text x="465" y="332.8" font-size="8.2" fill="#101010" textLength="14.5" lengthAdjust="spacingAndGlyphs">[ft/s]</text>
<text x="524.4" y="329.4" font-size="8.2" fill="#101010" textLength="39" lengthAdjust="spacingAndGlyphs">Pipe material</text>
<text x="583" y="324.6" font-size="8.2" fill="#101010" textLength="27" lengthAdjust="spacingAndGlyphs">Diameter</text>
<text x="583" y="332.8" font-size="8.2" fill="#101010" textLength="17" lengthAdjust="spacingAndGlyphs">[inch]</text>
<text x="405.6" y="346.2" font-size="8.2" fill="#ffffff" textLength="11" lengthAdjust="spacingAndGlyphs">413</text>
<text x="464.6" y="346.2" font-size="8.2" fill="#101010" textLength="14.8" lengthAdjust="spacingAndGlyphs">4072</text>
<text x="523.6" y="346.2" font-size="8.2" fill="#101010" textLength="26.5" lengthAdjust="spacingAndGlyphs">Cast iron</text>
<text x="581.8" y="346.2" font-size="8.2" fill="#101010" textLength="22" lengthAdjust="spacingAndGlyphs">DIAN 6</text>
</svg>
</body>
</html>
